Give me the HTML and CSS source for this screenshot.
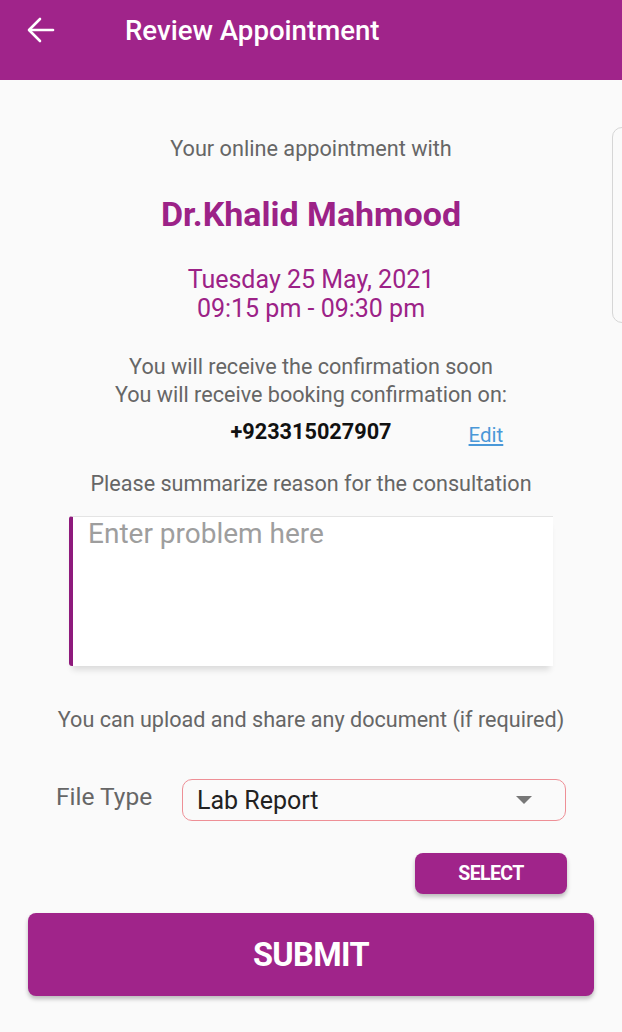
FILE: index.html
```html
<!DOCTYPE html>
<html lang="en">

<head>
    <meta charset="UTF-8">
    <meta name="viewport" content="width=device-width, initial-scale=1.0">
    <title>Review Appointment</title>
    <link rel="stylesheet" href="styles.css">
</head>

<body>
    <header class="app-bar">
        <button class="back" aria-label="Back">
            <svg width="28" height="26" viewBox="0 0 28 26" fill="none" stroke="#fff" stroke-width="2.6"
                stroke-linecap="round" stroke-linejoin="round">
                <path d="M26 13H2.5" />
                <path d="M13 2L2 13l11 11" />
            </svg>
        </button>
        <h1 class="title">Review Appointment</h1>
    </header>

    <main class="review">
        <!-- edge of the next card peeking in from the right -->
        <div class="peek-card"></div>

        <p class="intro">Your online appointment with</p>
        <h2 class="doctor">Dr.Khalid Mahmood</h2>
        <p class="slot">Tuesday 25 May, 2021<br>09:15 pm - 09:30 pm</p>

        <p class="note">You will receive the confirmation soon<br>You will receive booking confirmation on:</p>
        <div class="phone-row">
            <span class="phone">+923315027907</span>
            <a class="edit" href="#">Edit</a>
        </div>

        <p class="note summarize">Please summarize reason for the consultation</p>
        <textarea class="problem" placeholder="Enter problem here"></textarea>

        <p class="note upload">You can upload and share any document (if required)</p>
        <div class="file-row">
            <label class="file-label" for="fileType">File Type</label>
            <div class="select-box">
                <span id="fileType">Lab Report</span>
                <span class="caret"></span>
            </div>
        </div>

        <div class="select-row">
            <button class="btn btn-select">SELECT</button>
        </div>

        <button class="btn btn-submit">SUBMIT</button>
    </main>
</body>

</html>
```

FILE: styles.css
```css
body {
    margin: 0;
    font-family: Roboto, "Liberation Sans", Arial, sans-serif;
    background-color: #fafafa;
    color: #666;
}

.app-bar {
    display: flex;
    align-items: center;
    height: 80px;
    padding: 0 0 20px 27px;
    box-sizing: border-box;
    background-color: #a0248a;
}

.back {
    display: flex;
    padding: 0;
    border: none;
    background: none;
    cursor: pointer;
}

.title {
    margin: 0 0 0 70px;
    font-size: 27.6px;
    font-weight: 500;
    color: #fff;
}

.review {
    position: relative;
    display: flex;
    flex-direction: column;
    align-items: center;
    padding: 55px 0 0;
    text-align: center;
    overflow: hidden;
}

.peek-card {
    position: absolute;
    top: 47px;
    left: 612px;
    width: 30px;
    height: 194px;
    border: 1.5px solid #d6d6d6;
    border-radius: 10px;
}

.review p {
    margin: 0;
}

.intro {
    font-size: 21.7px;
    line-height: 28px;
}

.doctor {
    margin: 31px 0 0;
    font-size: 34px;
    line-height: 41px;
    font-weight: 700;
    color: #9c2287;
}

.slot {
    margin-top: 30px !important;
    font-size: 25px;
    line-height: 29px;
    color: #9c2287;
}

.note {
    margin-top: 30px !important;
    font-size: 21.6px;
    line-height: 28px;
}

.phone-row {
    display: grid;
    grid-template-columns: 1fr auto 1fr;
    align-items: baseline;
    width: 100%;
    margin-top: 9px;
}

.phone {
    grid-column: 2;
    font-size: 21.7px;
    line-height: 28px;
    font-weight: 700;
    color: #111;
}

.edit {
    justify-self: start;
    margin: 0 0 0 77px;
    font-size: 20.5px;
    color: #4a98d8;
    position: relative;
    top: 3px;
}

.summarize {
    margin-top: 24px !important;
}

.problem {
    width: 484px;
    height: 150px;
    margin-top: 18px;
    padding: 1px 15px;
    box-sizing: border-box;
    border: none;
    border-top: 1.5px solid #e4e4e4;
    border-left: 4px solid #8e1a7c;
    border-radius: 3px 0 0 3px;
    background-color: #fff;
    box-shadow: 0 7px 6px -3px rgba(0, 0, 0, 0.12);
    font-family: inherit;
    font-size: 28px;
    line-height: 32px;
    resize: none;
    outline: none;
}

.problem::placeholder {
    color: #9e9e9e;
}

.upload {
    margin-top: 40px !important;
}

.file-row {
    display: flex;
    align-items: center;
    align-self: stretch;
    margin-top: 45px;
    padding: 0 56px;
}

.file-label {
    width: 126px;
    margin-top: -8px;
    text-align: left;
    font-size: 24.5px;
}

.select-box {
    display: flex;
    align-items: center;
    justify-content: space-between;
    flex: 1;
    height: 42px;
    padding: 0 33px 0 14px;
    box-sizing: border-box;
    border: 1.5px solid #ee8f96;
    border-radius: 10px;
    font-size: 25px;
    color: #222;
}

.caret {
    width: 0;
    height: 0;
    border-left: 8px solid transparent;
    border-right: 8px solid transparent;
    border-top: 8px solid #777;
}

.select-row {
    display: flex;
    justify-content: flex-end;
    align-self: stretch;
    margin-top: 32px;
    padding-right: 55px;
}

.btn {
    border: none;
    border-radius: 8px;
    background-color: #a0248a;
    color: #fff;
    font-family: inherit;
    font-weight: 700;
    cursor: pointer;
    box-shadow: 0 3px 4px rgba(0, 0, 0, 0.25);
}

.btn-select {
    width: 152px;
    height: 41px;
    font-size: 19.5px;
    letter-spacing: -0.6px;
}

.btn-submit {
    width: 566px;
    height: 83px;
    margin: 19px 0 30px;
    font-size: 32.5px;
    letter-spacing: -0.6px;
}
```
